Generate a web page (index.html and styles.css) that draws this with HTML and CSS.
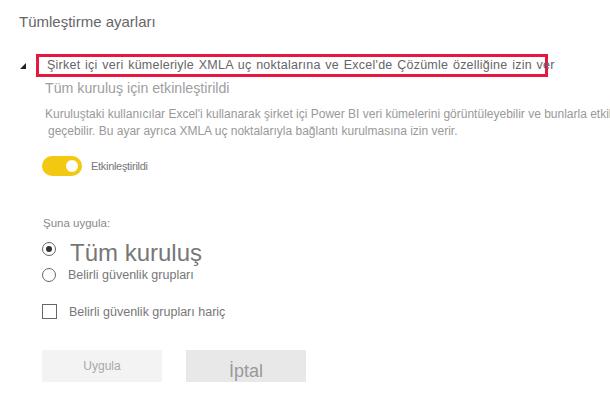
FILE: index.html
```html
<!DOCTYPE html>
<html lang="tr">
<head>
<meta charset="utf-8">
<link rel="stylesheet" href="styles.css">
</head>
<body>
<div class="page">
  <h1 class="title">Tümleştirme ayarları</h1>
  <div class="setting">
    <div class="setting-head">
      <span class="caret"></span>
      <div class="highlight">Şirket içi veri kümeleriyle XMLA uç noktalarına ve Excel'de Çözümle özelliğine izin ver</div>
    </div>
    <div class="setting-body">
      <div class="status">Tüm kuruluş için etkinleştirildi</div>
      <div class="desc">
        <span class="line">Kuruluştaki kullanıcılar Excel'i kullanarak şirket içi Power BI veri kümelerini görüntüleyebilir ve bunlarla etkileşime</span>
        <span class="line line2">geçebilir. Bu ayar ayrıca XMLA uç noktalarıyla bağlantı kurulmasına izin verir.</span>
      </div>
      <div class="toggle-row">
        <span class="toggle"><span class="knob"></span></span>
        <span class="toggle-label">Etkinleştirildi</span>
      </div>
      <div class="apply-label">Şuna uygula:</div>
      <div class="radio-row big">
        <span class="radio checked"></span>
        <span class="radio-text-big">Tüm kuruluş</span>
      </div>
      <div class="radio-row small">
        <span class="radio"></span>
        <span class="option-text">Belirli güvenlik grupları</span>
      </div>
      <div class="check-row">
        <span class="checkbox"></span>
        <span class="option-text">Belirli güvenlik grupları hariç</span>
      </div>
      <div class="buttons">
        <button class="btn btn-apply">Uygula</button>
        <button class="btn btn-cancel">İptal</button>
      </div>
    </div>
  </div>
</div>
</body>
</html>
```

FILE: styles.css
```css
html, body {
  margin: 0;
  padding: 0;
  background: #ffffff;
  overflow: hidden;
}
body {
  font-family: "Liberation Sans", Arial, sans-serif;
  color: #666666;
  width: 610px;
  height: 403px;
}
.page {
  padding: 12px 0 0 19px;
}
.title {
  margin: 0;
  font-size: 15px;
  font-weight: normal;
  line-height: 20px;
  color: #666666;
}
.setting {
  margin-top: 22px;
}
.setting-head {
  display: flex;
  align-items: center;
}
.caret {
  width: 0;
  height: 0;
  border-left: 6px solid transparent;
  border-bottom: 6px solid #222222;
  margin: 0 10px 0 1px;
}
.highlight {
  border: 3px solid #e8173f;
  height: 17px;
  line-height: 17px;
  padding: 0 0 0 8px;
  width: 498px;
  font-size: 12.5px;
  letter-spacing: 0.24px;
  word-spacing: 1px;
  color: #666666;
  white-space: nowrap;
}
.setting-body {
  padding-left: 26px;
}
.status {
  margin-top: 2px;
  font-size: 14.2px;
  line-height: 18px;
  color: #9e9e9e;
}
.desc {
  margin-top: 9px;
  font-size: 12px;
  line-height: 17px;
  color: #999999;
  width: 565px;
  overflow: hidden;
}
.line {
  display: block;
  white-space: nowrap;
}
.line2 {
  padding-left: 3px;
}
.toggle-row {
  display: flex;
  align-items: center;
  margin-top: 16px;
  margin-left: -3px;
}
.toggle {
  position: relative;
  width: 40px;
  height: 20px;
  border-radius: 10px;
  background: #f2c811;
}
.knob {
  position: absolute;
  right: 4px;
  top: 4px;
  width: 12px;
  height: 12px;
  border-radius: 50%;
  background: #ffffff;
}
.toggle-label {
  margin-left: 9px;
  font-size: 11px;
  letter-spacing: -0.3px;
  color: #777777;
}
.apply-label {
  margin-top: 40px;
  margin-left: -2px;
  font-size: 11.5px;
  line-height: 14px;
  color: #888888;
}
.radio-row {
  display: flex;
  margin-left: -3px;
}
.radio-row.big {
  margin-top: 10px;
  height: 26px;
  align-items: flex-start;
}
.radio-row.big .radio {
  margin-top: 2px;
}
.radio-row.small {
  margin-top: 2px;
  height: 14px;
  align-items: center;
}
.radio {
  box-sizing: border-box;
  width: 14px;
  height: 14px;
  border: 1px solid #666666;
  border-radius: 50%;
  position: relative;
  flex: none;
}
.radio.checked::after {
  content: "";
  position: absolute;
  left: 3px;
  top: 3px;
  width: 6px;
  height: 6px;
  border-radius: 50%;
  background: #333333;
}
.radio-text-big {
  margin-left: 14px;
  font-size: 24px;
  line-height: 26px;
  color: #777777;
}
.option-text {
  margin-left: 12px;
  font-size: 12.5px;
  line-height: 14px;
  color: #777777;
}
.check-row {
  display: flex;
  align-items: center;
  height: 15px;
  margin-top: 22px;
  margin-left: -3px;
}
.checkbox {
  box-sizing: border-box;
  width: 15px;
  height: 15px;
  border: 1px solid #666666;
  flex: none;
}
.buttons {
  display: flex;
  gap: 24px;
  margin-top: 31px;
  margin-left: -3px;
}
.btn {
  width: 120px;
  height: 32px;
  border: none;
  font-family: "Liberation Sans", Arial, sans-serif;
  padding: 0;
}
.btn-apply {
  background: #f3f3f3;
  color: #a8a8a8;
  font-size: 12px;
}
.btn-cancel {
  background: #e8e8e8;
  color: #999999;
  font-size: 18px;
  padding-top: 10px;
}
```
